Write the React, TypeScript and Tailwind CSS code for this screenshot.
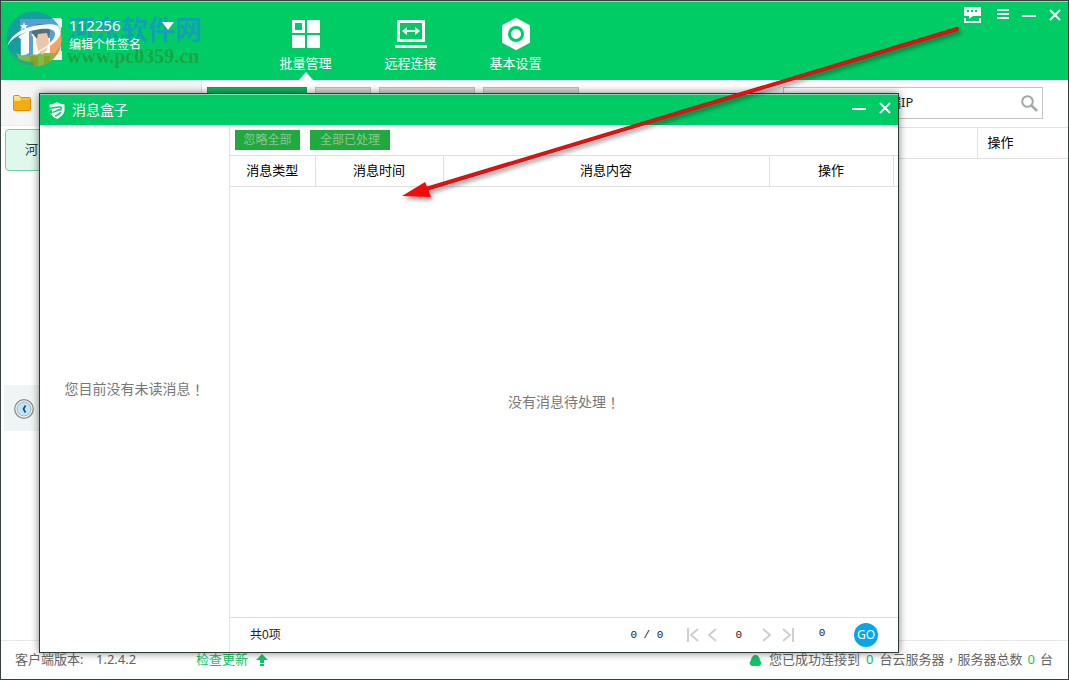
import type { ReactNode } from "react";

const navItems = [
  { label: "批量管理", icon: <GridIcon />, active: true },
  { label: "远程连接", icon: <RemoteIcon />, active: false },
  { label: "基本设置", icon: <HexIcon />, active: false },
];

const columns = [
  { label: "消息类型", width: "w-[85px]" },
  { label: "消息时间", width: "w-[128px]" },
  { label: "消息内容", width: "" },
  { label: "操作", width: "w-[124px]" },
];

function GridIcon() {
  return (
    <svg width="28" height="28" viewBox="0 0 28 28" fill="#fff">
      <path fillRule="evenodd" d="M0 0h13v13H0zM3 3v7h7V3z" />
      <path d="M15 0h13v13H15zM0 15h13v13H0zM15 15h13v13H15z" />
    </svg>
  );
}

function RemoteIcon() {
  return (
    <svg width="32" height="28" viewBox="0 0 32 28" fill="#fff">
      <path fillRule="evenodd" d="M3 0h26a1 1 0 0 1 1 1v21H2V1a1 1 0 0 1 1-1zM5 3v16h22V3z" />
      <path d="M7 11l5-4v3h8V7l5 4-5 4v-3h-8v3zM0 25h32v3H0z" />
    </svg>
  );
}

function HexIcon() {
  return (
    <svg width="28" height="32" viewBox="0 0 28 32">
      <path d="M14 1l13 7v16l-13 7-13-7V8z" fill="#fff" stroke="#fff" strokeWidth="2" strokeLinejoin="round" />
      <circle cx="14" cy="16" r="6.500" fill="none" stroke="#00cc66" strokeWidth="3" />
    </svg>
  );
}

function CloseIcon() {
  return (
    <svg width="12" height="12" viewBox="0 0 12 12" fill="none" stroke="#fff" strokeWidth="2">
      <path d="M1 1l10 10M11 1L1 11" />
    </svg>
  );
}

function MinusIcon() {
  return (
    <svg width="14" height="12" viewBox="0 0 14 12" fill="#fff">
      <path d="M0 6h14v2H0z" />
    </svg>
  );
}

function ShieldIcon() {
  return (
    <svg width="16" height="17" viewBox="0 0 16 17" fill="none">
      <path d="M8 0c2 1.600 5 2.300 7.500 2.400V8c0 4-3.500 7-7.500 9C4 15 .5 12 .5 8V2.400C3 2.300 6 1.600 8 0z" fill="#fff" />
      <path d="M0 6.200C5 7 7 3.800 12 5.200v3.300M3.500 10c3 1 4-3 8.500-2M6 14c2 0 4-2.500 6-3.500" stroke="#00cc66" strokeWidth="1.500" />
      <path d="M0 7l3 1v4l-2-1z" fill="#00cc66" />
    </svg>
  );
}

function FolderIcon() {
  return (
    <svg width="18" height="16" viewBox="0 0 18 16">
      <path d="M.5 1.500a1 1 0 0 1 1-1H6l2 2h8.500a1 1 0 0 1 1 1v11a1 1 0 0 1-1 1h-15a1 1 0 0 1-1-1z" fill="#f5ab12" stroke="#dc8d06" />
      <path d="M1 2a1 1 0 0 1 1-1h4l2 2.500L6.500 5H1z" fill="#ffe089" />
      <path d="M1 5.500h6l2-1.500h8" stroke="#ffd257" fill="none" />
    </svg>
  );
}

function ClockIcon() {
  return (
    <svg width="20" height="20" viewBox="0 0 20 20">
      <circle cx="10" cy="10" r="9.300" fill="#f4f6f6" stroke="#8d8d8d" strokeWidth="1.300" />
      <circle cx="10" cy="10" r="7" fill="#c5e3f3" stroke="#8ba9b8" strokeWidth=".8" />
      <path d="M11.500 6.500L9.500 10l2 3.500" fill="none" stroke="#155a80" strokeWidth="1.800" />
    </svg>
  );
}

function Watermark() {
  return (
    <div className="pointer-events-none absolute left-[5px] top-[10px] flex gap-[5px]">
      <svg width="56" height="56" viewBox="0 0 56 56">
        <defs>
          <clipPath id="disc">
            <circle cx="28" cy="28" r="27.500" />
          </clipPath>
        </defs>
        <path d="M40 40h16v9H40zM50 8h6v9z" fill="#e8f6ee" />
        <g clipPath="url(#disc)">
          <path d="M0 0h56v56H0z" fill="#149f9c" />
          <path d="M14 8h42v41H14z" fill="#5a9fd2" />
          <path d="M56 20v29H36l6-16z" fill="#f0a468" />
          <path d="M44 49l12-16v23H40z" fill="#e08a2e" />
          <path d="M10 42q10 5 19 0l20 0-6 14H16z" fill="#7cba4c" />
          <path d="M24 45h8v11h-8zM38 45h6v9h-6z" fill="#8f9f20" />
          <path d="M2 44C8 52 18 56 28 56V51C18 51 10 48 6 41z" fill="#20ad86" />
          <path d="M12 26l11-7v23q-4 3-8 2V28zM25 23h9v19q-4 3-7 1V26zM35 27h9v15h-9z" fill="#fbf9f6" />
          <path d="M31 22h10l2 9-2 8-5 5-4-5-2-8z" fill="#edc5a8" />
          <path d="M26 22q-1-4 3-6 1-4 7-3 7 0 8 8l-1 6-2-5-9 1-1 5z" fill="#54717c" />
          <path d="M1 36C4 25 14 18 28 15c14-3 27-3 27 5 0 9-13 18-28 23 12-6 22-13 22-20 0-6-10-6-20-4C16 21 5 27 1 36z" fill="#f6fbf9" />
        </g>
        <path d="M18 11l1 3h3l-2 2 1 3-3-2-3 2 1-3-2-2h3z" fill="#fff" />
      </svg>
      <div className="whitespace-nowrap pt-1">
        <div className="text-[27px] font-bold leading-[30px] text-[#1a8ae0]/65">河东软件网</div>
        <div className="font-['Liberation_Serif',serif] text-[20px] font-bold leading-[22px] text-[#2b8c2b]/65">www.pc0359.cn</div>
      </div>
    </div>
  );
}

function Header() {
  return (
    <header className="flex h-[79px] shrink-0 border-t border-[#7be3b0] bg-[#00cc66] text-white">
      <div className="flex w-[252px] shrink-0 pl-[18px] pt-[13px]">
        <div className="mt-[3px] size-[42px] bg-white/80" />
        <div className="relative z-10 w-[84px] pl-2">
          <div className="text-[15px] leading-5">112256</div>
          <div className="whitespace-nowrap text-xs leading-5">编辑个性签名</div>
        </div>
        <button aria-label="状态" className="relative z-10 ml-[17px] mt-[7px] h-2 w-3">
          <svg width="12" height="8" viewBox="0 0 12 8" fill="#fff">
            <path d="M0 0h12L6 8z" />
          </svg>
        </button>
      </div>
      <nav className="flex">
        {navItems.map((item) => (
          <button key={item.label} className="flex w-[105px] flex-col items-center pt-4">
            <span className="mb-1 flex h-8 items-center">{item.icon}</span>
            <span className="text-[13px] leading-[18px]">{item.label}</span>
            {item.active && <span className="border-x-[7px] border-b-[8px] border-x-transparent border-b-white" />}
          </button>
        ))}
      </nav>
      <div className="ml-auto flex h-[26px] items-center pr-[7px]">
        <button aria-label="消息盒子" className="mr-4">
          <svg width="17" height="18" viewBox="0 0 17 18" fill="#fff">
            <path fillRule="evenodd" d="M0 1h17v9H9l-4 3v-3H0zM3 4v2h2V4zM7 4v2h2V4zM11 4v2h2V4z" />
            <path d="M0 12h2v3h13v-3h2v5H0z" />
          </svg>
        </button>
        <button aria-label="菜单" className="mr-[13px]">
          <svg width="12" height="12" viewBox="0 0 12 12" fill="#fff">
            <path d="M0 0h12v2H0zM0 4h12v2H0zM0 8h12v2H0z" />
          </svg>
        </button>
        <button aria-label="最小化" className="mr-[13px]">
          <MinusIcon />
        </button>
        <button aria-label="关闭">
          <CloseIcon />
        </button>
      </div>
    </header>
  );
}

function Sidebar() {
  return (
    <aside className="w-[201px] shrink-0 border-r border-[#e6e0e0]">
      <div className="flex h-[46px] items-center border-b border-[#eceeee] bg-[#f4f6f6] pl-3 pt-px">
        <FolderIcon />
      </div>
      <div className="ml-1 min-h-[259px] pt-[3px]">
        <div className="flex h-[42px] items-center rounded-sm border border-[#6fcfa2] bg-[#def8eb] pl-[19px] text-[13px] text-[#333]">
          河东
        </div>
      </div>
      <div className="ml-[3px] flex h-[46px] items-center bg-[#eff5f4] pl-[10px] pt-px">
        <ClockIcon />
      </div>
    </aside>
  );
}

function Tab({ label, width, active }: { label: string; width: string; active?: boolean }) {
  return (
    <button
      aria-label={label}
      className={`h-[31px] border ${width} ${
        active ? "border-[#0fa558] bg-[#0db85f]" : "border-[#bdbdbd] bg-[#dadada]"
      }`}
    />
  );
}

function Content() {
  return (
    <main className="min-w-0 flex-1">
      <div className="flex h-[47px] gap-2 pl-[5px] pr-[25px] pt-[7px]">
        <Tab label="全部" width="w-[100px]" active />
        <Tab label="添加" width="w-14" />
        <Tab label="批量导入" width="w-24" />
        <Tab label="批量导出" width="w-24" />
        <div className="ml-auto flex h-8 w-[260px] items-center border border-[#c4c4c4] pl-[13px] pr-1">
          <input
            aria-label="搜索"
            defaultValue="输入名称或服务端IP"
            className="min-w-0 flex-1 text-[13px] text-[#222] outline-none"
          />
          <svg width="17" height="17" viewBox="0 0 17 17" fill="none" stroke="#a3a8a8">
            <circle cx="6.500" cy="6.500" r="5.300" strokeWidth="2" />
            <path d="M10.500 10.500l5.500 5.500" strokeWidth="2.500" />
          </svg>
        </div>
      </div>
      <table className="w-full table-fixed border-y border-[#e2e2e2] text-[13px]">
        <thead>
          <tr className="h-[31px]">
            <td />
            <th className="w-[91px] border-l border-[#e2e2e2] pl-[10px] text-left font-normal">操作</th>
          </tr>
        </thead>
      </table>
    </main>
  );
}

// full-width punctuation, centred in its box
function Mark({ children }: { children: string }) {
  return <span className="font-['Noto_Sans_CJK_TC',sans-serif]" lang="zh-TW">{children}</span>;
}

function PageButton({ label, className, children }: { label: string; className: string; children: ReactNode }) {
  return (
    <button aria-label={label} className={className}>
      <svg width="12" height="14" viewBox="0 0 12 14" fill="none" stroke="#cfcfcf" strokeWidth="2">
        {children}
      </svg>
    </button>
  );
}

function Pager() {
  return (
    <div className="flex h-[35px] shrink-0 items-center border-t border-[#e0e0e0] pl-5 pr-5 text-xs text-[#222]">
      <span className="mr-auto font-['Liberation_Sans','Noto_Sans_CJK_SC',sans-serif]">共0项</span>
      <div className="flex items-center font-['Liberation_Mono',monospace] text-[11px]">
        <span>0 / 0</span>
        <PageButton label="首页" className="ml-6">
          <path d="M1 0v14M11 1L4 7l7 6" />
        </PageButton>
        <PageButton label="上一页" className="ml-2">
          <path d="M9 1L2 7l7 6" />
        </PageButton>
        <span className="ml-4">0</span>
        <PageButton label="下一页" className="ml-5">
          <path d="M1 1l7 6-7 6" />
        </PageButton>
        <PageButton label="末页" className="ml-2">
          <path d="M1 1l7 6-7 6M11 0v14" />
        </PageButton>
        <input aria-label="页码" defaultValue="0" className="ml-4 h-5 w-6 pb-1 text-center outline-none" />
        <button className="ml-5 size-6 rounded-full bg-[#06a7ea] font-['Noto_Sans',sans-serif] text-xs leading-6 text-white">
          GO
        </button>
      </div>
    </div>
  );
}

function MessageBox() {
  return (
    <section className="absolute bottom-[26px] left-[38px] right-[169px] top-[92px] flex flex-col border border-[#2d3a36] bg-white shadow-[0_0_8px_rgba(0,0,0,0.500)]">
      <div className="flex h-[31px] shrink-0 items-center border-t border-[#7be3b0] bg-[#00cc66] pl-[9px] pr-[7px] text-white">
        <ShieldIcon />
        <h1 className="ml-[7px] mr-auto text-sm">消息盒子</h1>
        <div className="flex h-[26px] items-center gap-[13px] self-start">
          <button aria-label="最小化">
            <MinusIcon />
          </button>
          <button aria-label="关闭">
            <CloseIcon />
          </button>
        </div>
      </div>
      <div className="flex min-h-0 flex-1">
        <div className="flex w-[190px] shrink-0 items-center justify-center border-r border-[#dfe3e3] text-sm text-[#777]">
          您目前没有未读消息<Mark>！</Mark>
        </div>
        <div className="flex min-w-0 flex-1 flex-col">
          <div className="flex h-[30px] shrink-0 gap-[10px] pl-[5px] pt-[5px] text-xs text-[#93c39a]">
            <button className="h-5 w-[65px] bg-[#1eaa3c]">忽略全部</button>
            <button className="h-5 w-20 bg-[#1eaa3c]">全部已处理</button>
          </div>
          <table className="w-full table-fixed border-y border-[#e0e0e0] text-[13px] text-black">
            <thead>
              <tr className="h-[31px]">
                {columns.map((col) => (
                  <th key={col.label} className={`border-r border-[#e0e0e0] p-0 font-normal ${col.width}`}>
                    {col.label}
                  </th>
                ))}
                <td className="w-[5px] p-0" />
              </tr>
            </thead>
          </table>
          <div className="flex flex-1 items-center justify-center text-sm text-[#777]">
            没有消息待处理<Mark>！</Mark>
          </div>
          <Pager />
        </div>
      </div>
    </section>
  );
}

function StatusBar() {
  return (
    <footer className="flex h-[39px] shrink-0 items-center border-t border-[#e8e8e8] pl-[14px] pr-[15px] text-[13px] text-[#666]">
      <span className="w-[81px]">客户端版本:</span>
      <span className="w-[100px]">1.2.4.2</span>
      <a href="#" className="flex items-center gap-2 text-[#12c468]">
        检查更新
        <svg width="12" height="12" viewBox="0 0 12 12" fill="#12c468">
          <path d="M6 0l6 6H8v3H4V6H0zM4 10h4v2H4z" />
        </svg>
      </a>
      <span className="ml-auto flex items-center">
        <svg width="13" height="11" viewBox="0 0 13 11" fill="#12c468" className="mr-[7px]">
          <path d="M3 11a3 3 0 0 1-1-5.500C2 2.500 4 0 6.500 0S11 2.500 11 5.500A3 3 0 0 1 10 11z" />
        </svg>
        您已成功连接到
        <b className="mx-[6px] font-normal text-[#12c468]">0</b>
        台云服务器<Mark>，</Mark>服务器总数
        <b className="mx-[5px] font-normal text-[#12c468]">0</b>台
      </span>
    </footer>
  );
}

// red pointer from the message icon down to the message box
function Pointer() {
  return (
    <svg
      className="pointer-events-none absolute right-[100px] top-[20px] drop-shadow-[2px_3px_2px_rgba(0,0,0,0.400)]"
      width="570"
      height="190"
      viewBox="398 21 570 190"
    >
      <path d="M957 29L426 189" stroke="#c01414" strokeWidth="4" strokeLinecap="round" />
      <path d="M957 29L426 189" stroke="#e80f0f" strokeWidth="2.500" strokeLinecap="round" />
      <path d="M402 196l23-14 3 7 3 8z" fill="#f50a0a" />
    </svg>
  );
}

export default function App() {
  return (
    <div className="relative flex h-screen flex-col overflow-hidden border border-[#35403c] bg-white font-['Noto_Sans','Noto_Sans_CJK_SC',sans-serif]">
      <Header />
      <div className="flex min-h-0 flex-1">
        <Sidebar />
        <Content />
      </div>
      <StatusBar />
      <MessageBox />
      <Watermark />
      <Pointer />
    </div>
  );
}
